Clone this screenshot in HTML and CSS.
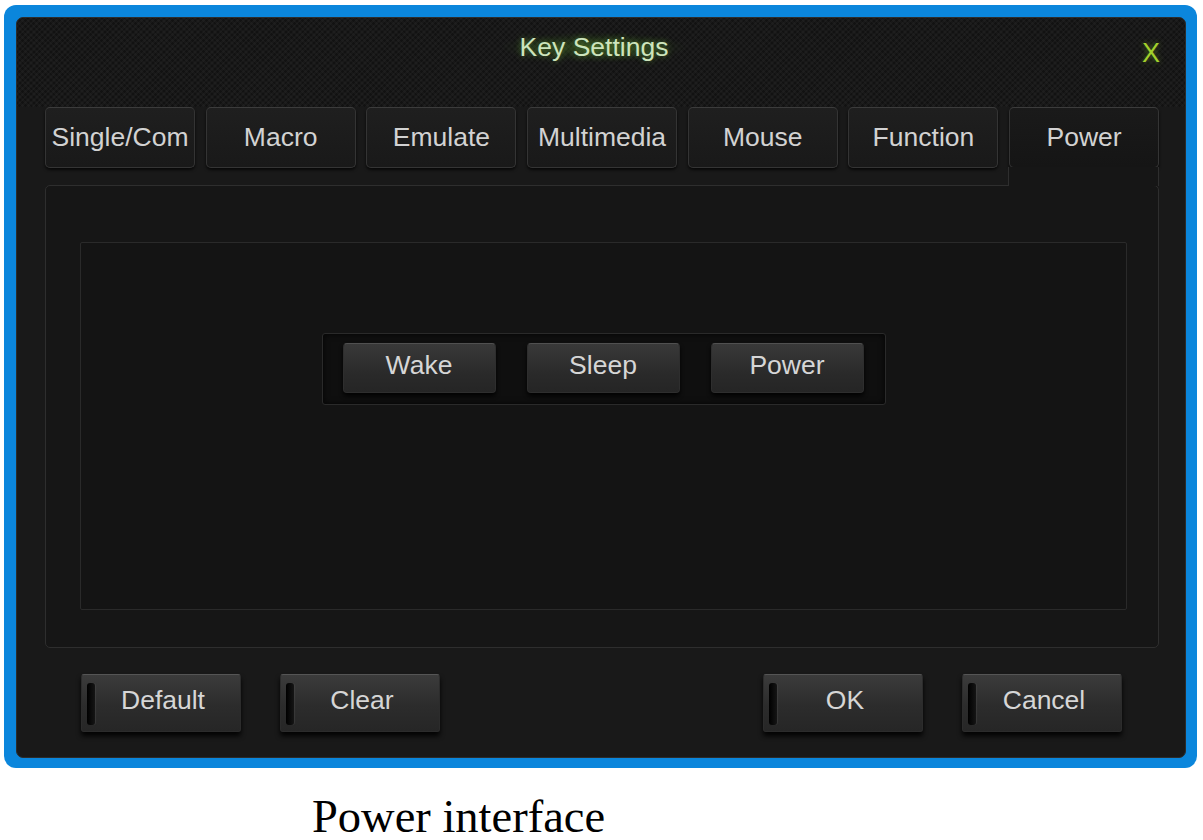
FILE: index.html
```html
<!DOCTYPE html>
<html>
<head>
<meta charset="utf-8">
<link rel="stylesheet" href="styles.css">
</head>
<body>
<div class="window">
  <div class="inner">
    <div class="header">
      <span></span>
      <div class="title">Key Settings</div>
      <div class="close">X</div>
    </div>
    <div class="tabs">
      <div class="tab">Single/Com</div>
      <div class="tab">Macro</div>
      <div class="tab">Emulate</div>
      <div class="tab">Multimedia</div>
      <div class="tab">Mouse</div>
      <div class="tab">Function</div>
      <div class="tab active">Power</div>
    </div>
    <div class="panel">
      <div class="box">
        <div class="group">
          <div class="btn">Wake</div>
          <div class="btn">Sleep</div>
          <div class="btn">Power</div>
        </div>
      </div>
    </div>
    <div class="actions">
      <div class="pair">
        <div class="abtn"><span class="slot"></span>Default</div>
        <div class="abtn"><span class="slot"></span>Clear</div>
      </div>
      <div class="pair">
        <div class="abtn"><span class="slot"></span>OK</div>
        <div class="abtn"><span class="slot"></span>Cancel</div>
      </div>
    </div>
  </div>
</div>
<div class="caption">Power interface</div>
</body>
</html>
```

FILE: styles.css
```css
* { box-sizing: border-box; }
html, body { margin: 0; padding: 0; background: #fff; }
body { width: 1203px; height: 840px; overflow: hidden; }

.window {
  margin: 5px 6px 0 4px;
  width: 1193px;
  height: 763px;
  background: #0b86dc;
  border-radius: 12px;
  padding: 12px 11px 10px 12px;
}
.inner {
  height: 100%;
  background: #191919;
  border: 1px solid #2c2c2c;
  border-radius: 7px;
  display: flex;
  flex-direction: column;
  font-family: "Liberation Sans", Arial, sans-serif;
  color: #d0d0d0;
}
.header {
  height: 89px;
  display: grid;
  grid-template-columns: 1fr auto 1fr;
  align-items: start;
  padding-top: 14px;
  background-image: repeating-linear-gradient(45deg, rgba(255,255,255,0.025) 0 2px, transparent 2px 4px),
                    repeating-linear-gradient(-45deg, rgba(0,0,0,0.25) 0 2px, transparent 2px 4px);
  border-radius: 6px 6px 0 0;
}
.title {
  font-size: 26.5px;
  line-height: 30px;
  color: #cde4bc;
  padding: 0 18px;
  margin-right: 14px;
  background: radial-gradient(ellipse at center, rgba(90,150,40,0.35) 0%, rgba(60,110,30,0.15) 45%, rgba(0,0,0,0) 72%);
  text-shadow: 0 0 6px rgba(110,180,60,0.6);
}
.close {
  justify-self: end;
  margin-right: 25px;
  margin-top: 10px;
  font-size: 27px;
  line-height: 22px;
  color: #a2d02c;
  text-shadow: 0 0 6px rgba(140,200,40,0.5);
}

.tabs {
  display: flex;
  gap: 10.7px;
  padding-left: 28px;
  height: 61px;
  position: relative;
  z-index: 2;
}
.tab {
  width: 150px;
  height: 61px;
  display: flex;
  align-items: center;
  justify-content: center;
  font-size: 26.5px;
  color: #d2d2d2;
  background: linear-gradient(#1f1f1f, #191919);
  border: 1px solid #343434;
  border-top-color: #3c3c3c;
  border-radius: 5px;
  box-shadow: 0 2px 3px rgba(0,0,0,0.7);
  padding-bottom: 1px;
}
.tab.active {
  position: relative;
  background: linear-gradient(#1a1a1a, #151515);
}
.tab.active::after {
  content: "";
  position: absolute;
  top: 100%;
  left: -2px;
  right: -1px;
  height: 19px;
  background: #161616;
  border-left: 1px solid #2e2e2e;
  border-right: 1px solid #2e2e2e;
}

.panel {
  margin: 17px 0 0 28px;
  width: 1114px;
  height: 463px;
  border: 1px solid #2e2e2e;
  border-radius: 5px;
  background: #161616;
  padding: 56px 31px 0 34px;
}
.box {
  height: 368px;
  border: 1px solid #2a2a2a;
  border-radius: 2px;
  background: #141414;
  display: flex;
  justify-content: center;
  align-items: flex-start;
  padding-top: 90px;
}
.group {
  display: flex;
  gap: 31px;
  padding: 9px 21px 11px 20px;
  background: #0f0f0f;
  border: 1px solid #2a2a2a;
  border-radius: 3px;
  box-shadow: inset 0 0 6px rgba(0,0,0,0.8);
}
.btn {
  width: 153px;
  height: 50px;
  display: flex;
  align-items: center;
  justify-content: center;
  padding-bottom: 5px;
  font-size: 26.5px;
  color: #d6d6d6;
  background: linear-gradient(#393939, #2a2a2a 60%, #252525);
  border: 1px solid #2e2e2e;
  border-top-color: #505050;
  border-radius: 4px;
  box-shadow: 0 3px 4px rgba(0,0,0,0.9);
}

.actions {
  margin-top: 26px;
  height: 58px;
  display: flex;
  justify-content: space-between;
  padding: 0 63px 0 64px;
}
.pair {
  display: flex;
  gap: 39px;
}
.abtn {
  position: relative;
  width: 160px;
  height: 58px;
  display: flex;
  align-items: center;
  justify-content: center;
  padding-left: 4px;
  padding-bottom: 5px;
  font-size: 26.5px;
  color: #d6d6d6;
  background: linear-gradient(#3b3b3b, #2c2c2c 55%, #262626);
  border: 1px solid #2c2c2c;
  border-top-color: #555;
  border-radius: 3px;
  box-shadow: 0 4px 5px rgba(0,0,0,0.9);
}
.slot {
  position: absolute;
  left: 5px;
  top: 8px;
  width: 8px;
  height: 42px;
  border-radius: 3px;
  background: linear-gradient(90deg, #000, #151515);
  box-shadow: 1px 0 1px rgba(90,90,90,0.35);
}

.caption {
  margin-top: 24px;
  padding-left: 312px;
  font-family: "Liberation Serif", "Times New Roman", serif;
  font-size: 46.5px;
  line-height: 50px;
  color: #000;
}
```
